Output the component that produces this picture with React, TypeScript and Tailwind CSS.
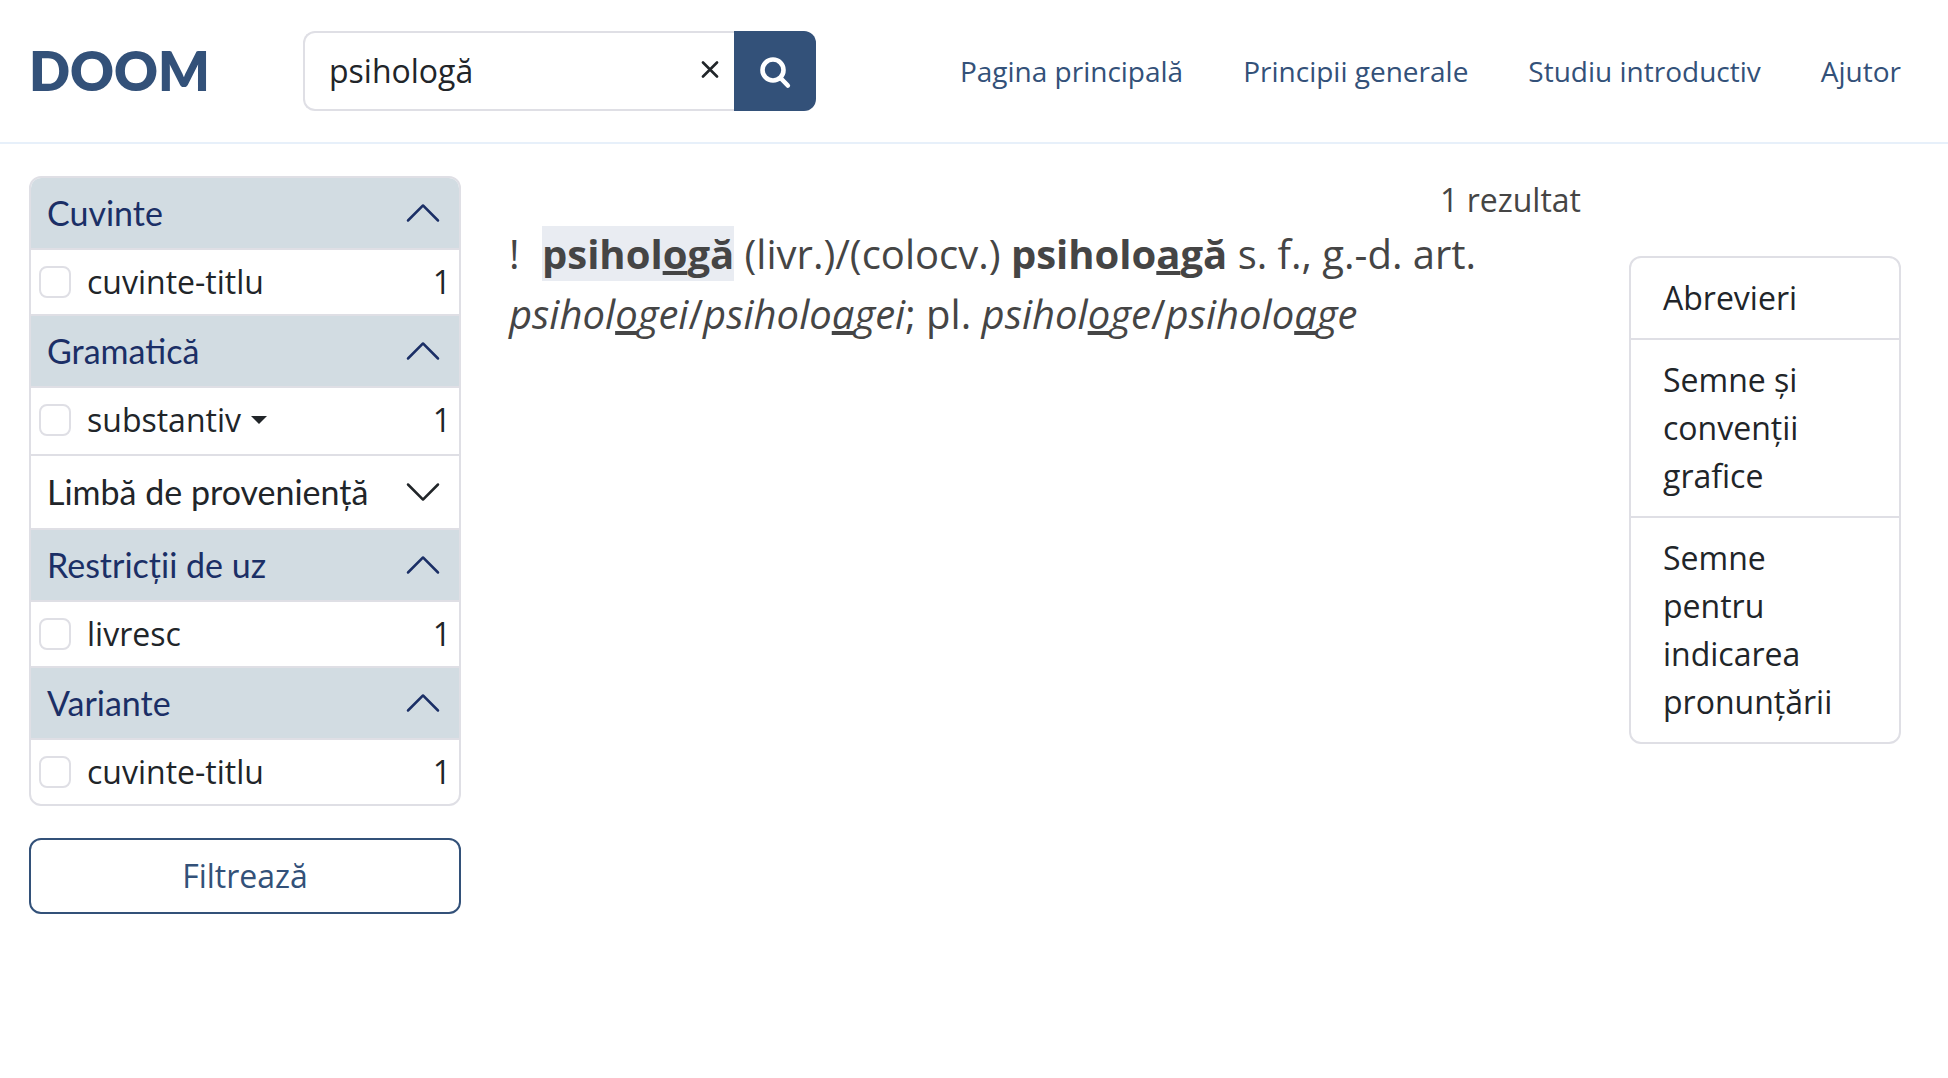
import React, { useState } from 'react';

const navLinks = ['Pagina principală', 'Principii generale', 'Studiu introductiv', 'Ajutor'];

const helpLinks = ['Abrevieri', 'Semne și convenții grafice', 'Semne pentru indicarea pronunțării'];

const filterGroups = [
  { id: 'cuvinte', title: 'Cuvinte', open: true, items: [{ label: 'cuvinte-titlu', count: 1 }] },
  { id: 'gramatica', title: 'Gramatică', open: true, items: [{ label: 'substantiv', count: 1, nested: true }] },
  { id: 'limba', title: 'Limbă de proveniență', open: false, items: [] },
  { id: 'restrictii', title: 'Restricții de uz', open: true, items: [{ label: 'livresc', count: 1 }] },
  { id: 'variante', title: 'Variante', open: true, items: [{ label: 'cuvinte-titlu', count: 1 }] },
];

function Chevron({ open }: { open: boolean }) {
  return (
    <svg viewBox="0 0 16 16" fill="currentColor" className={open ? 'size-10 shrink-0 rotate-180' : 'size-10 shrink-0'}>
      <path d="M1.646 4.646a.5.5 0 0 1 .708 0L8 10.293l5.646-5.647a.5.5 0 0 1 .708.708l-6 6a.5.5 0 0 1-.708 0l-6-6a.5.5 0 0 1 0-.708z" />
    </svg>
  );
}

function FilterGroup({ group }: any) {
  const [open, setOpen] = useState(group.open);

  return (
    <section>
      <h2>
        <button
          type="button"
          aria-expanded={open}
          onClick={() => setOpen(!open)}
          className={
            open
              ? 'flex h-[70px] w-full items-center justify-between bg-[#d2dce2] px-4 text-left font-[Lato] text-[34px] text-[#1b2f66]'
              : 'flex h-[72px] w-full items-center justify-between bg-white px-4 text-left font-[Lato] text-[34px] text-[#212529]'
          }
        >
          {group.title}
          <Chevron open={open} />
        </button>
      </h2>
      {open &&
        group.items.map((item: any) => (
          <div
            key={item.label}
            className={
              item.nested
                ? 'flex h-[68px] items-center border-t-2 border-[#dfdfe5] px-2 pb-[2px]'
                : 'flex h-[66px] items-center border-t-2 border-[#dfdfe5] px-2'
            }
          >
            <input
              type="checkbox"
              id={`${group.id}-${item.label}`}
              className="size-8 shrink-0 appearance-none rounded-lg border-2 border-[#dfdfe5] bg-white checked:bg-[#335179]"
            />
            <label htmlFor={`${group.id}-${item.label}`} className="ml-4">{item.label}</label>
            {item.nested && (
              <button type="button" aria-label="Detalii" className="ml-2 p-[2px]">
                <svg viewBox="0 0 16 8" fill="currentColor" className="h-2 w-4">
                  <path d="M0 0h16L8 8z" />
                </svg>
              </button>
            )}
            <span className="ml-auto">{item.count}</span>
          </div>
        ))}
    </section>
  );
}

export default function App() {
  const [query, setQuery] = useState('psihologă');

  return (
    <div className="min-h-screen bg-white font-['Open_Sans',sans-serif] text-[32px] leading-[48px] text-[#212529]">
      <header className="flex h-36 items-center border-b-2 border-[#e7f0fa] pr-[47px] pl-[29px]">
        <a href="#" className="w-[274px] shrink-0 font-[Lato] text-[54px] font-extrabold text-[#335179]">DOOM</a>

        <form className="flex h-20 w-[513px] shrink-0" onSubmit={(e) => e.preventDefault()}>
          <div className="flex min-w-0 flex-1 items-center rounded-l-xl border-2 border-r-0 border-[#dfdfe5] pr-[10px] pl-6">
            <input
              type="text"
              aria-label="Caută"
              value={query}
              onChange={(e) => setQuery(e.target.value)}
              className="min-w-0 flex-1 bg-transparent outline-none"
            />
            <button type="button" aria-label="Șterge" onClick={() => setQuery('')} className="p-1">
              <svg viewBox="0 0 20 20" fill="none" stroke="currentColor" strokeWidth="2.6" strokeLinecap="round" className="size-5">
                <path d="M3 1.5l14 14M17 1.5L3 15.5" />
              </svg>
            </button>
          </div>
          <button type="submit" aria-label="Caută" className="flex w-[82px] items-center justify-center rounded-r-xl bg-[#335179] text-white">
            <svg viewBox="0 0 32 32" fill="none" stroke="currentColor" strokeWidth="4.6" strokeLinecap="round" className="size-8 overflow-visible">
              <circle cx="14" cy="15" r="10.5" />
              <path d="M22 23.5l6.8 7" />
            </svg>
          </button>
        </form>

        <nav className="ml-auto flex gap-[60px] text-[28px] text-[#335179]">
          {navLinks.map((link) => (
            <a key={link} href="#" className="whitespace-nowrap">{link}</a>
          ))}
        </nav>
      </header>

      <div className="flex items-start gap-12 pt-8 pr-[47px] pl-[29px]">
        <aside className="w-[432px] shrink-0">
          <div className="divide-y-2 divide-[#dfdfe5] overflow-hidden rounded-xl border-2 border-[#dfdfe5]">
            {filterGroups.map((group) => (
              <FilterGroup key={group.id} group={group} />
            ))}
          </div>
          <button type="button" className="mt-8 h-[76px] w-full rounded-xl border-2 border-[#335179] text-[#335179]">
            Filtrează
          </button>
        </aside>

        <main className="min-w-0 flex-1 text-[#454545]">
          <p className="text-right">1 rezultat</p>
          <p className="text-[40px] leading-[60px]">
            <span className="mr-3">!</span>{' '}
            <strong className="bg-[#e9ecf2] font-bold">psihol<u>o</u>gă</strong> (livr.)/(colocv.){' '}
            <strong className="font-bold">psiholo<u>a</u>gă</strong> s. f., g.-d. art.{' '}
            <em>psihol<u>o</u>gei</em>/<em>psiholo<u>a</u>gei</em>; pl. <em>psihol<u>o</u>ge</em>/<em>psiholo<u>a</u>ge</em>
          </p>
        </main>

        <nav className="mt-20 w-[272px] shrink-0 divide-y-2 divide-[#dfdfe5] rounded-xl border-2 border-[#dfdfe5]">
          {helpLinks.map((link) => (
            <a key={link} href="#" className="block px-8 py-4">{link}</a>
          ))}
        </nav>
      </div>
    </div>
  );
}
